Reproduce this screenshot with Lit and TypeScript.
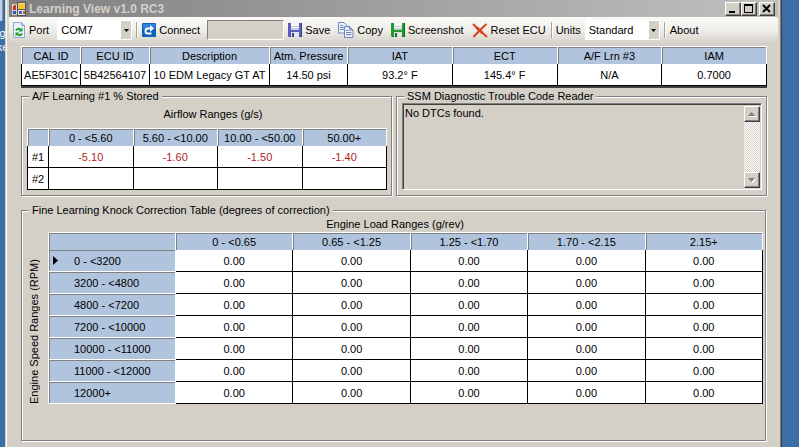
import { LitElement, html, css, svg } from "lit";
import { customElement } from "lit/decorators.js";

const icons = {
  app: svg`<svg width="14" height="14" viewBox="0 0 14 14"><path fill="#d4d0c8" d="M0 2h5v11H0z"/><path fill="#c03a1e" d="M1 3h3v5H1z"/><path fill="#e8c0a0" d="M1 3h1v1H1z"/><path fill="#555" d="M5 0h9v14H5z"/><path fill="#f6c63c" d="M6 1h7v6H6z"/><path fill="#fbe08a" d="M6 1h7v1H6z"/><path fill="#2f56b8" d="M1 9h3v3H1z"/><path fill="#e9e6dc" d="M6 8h7v5H6z"/><path fill="#3a62cc" d="M7 9h3v3H7z"/><path fill="#d05030" d="M11 9h2v3h-2z"/></svg>`,
  port: svg`<svg width="14" height="16" viewBox="0 0 14 16"><path fill="#eaf2ff" stroke="#90a8d0" d="M.5.500h8l3 3v12H.500z"/><path fill="#c4d4f0" stroke="#90a8d0" d="M8.500.500v3h3z"/><path fill="none" stroke="#1f9a28" stroke-width="2" d="M3 8.500c1-2 3-2 4.500-1M9 11.500c-1 2-3 2-4.500 1"/><path fill="#1f9a28" d="M9.500 5.500v4h-4zM2.500 14.500v-4h4z"/></svg>`,
  connect: svg`<svg width="14" height="14" viewBox="0 0 14 14"><rect width="14" height="14" rx="1" fill="#0f62b8"/><path fill="#2c86dc" d="M1 1h12v5H1z"/><path fill="none" stroke="#fff" stroke-width="2" d="M9.500 10.500H5.500c-1.500 0-2-1-2-2.500s1-2.500 2.500-2.500h2.500"/><path fill="#fff" d="M8 2l4 3.500L8 9z"/></svg>`,
  copy: svg`<svg width="16" height="16" viewBox="0 0 16 16"><g stroke="#7084bc"><path fill="#eaf0fc" d="M.5.500h5.500l3 3v7.500H.500z"/><path d="M2 3.500h3M2 5.500h5M2 7.500h4"/><path fill="#eaf0fc" d="M6.500 4.500h5l3.500 3.500v7.500H6.500z"/><path fill="#b8c8ec" d="M11.500 4.500V8H15z"/><path d="M8 8.500h2.500M8 10.500h5.500M8 12.500h5.500"/></g></svg>`,
  reset: svg`<svg width="16" height="15" viewBox="0 0 16 15"><path fill="none" stroke="#d8441c" stroke-width="2" d="M1 1l4.500 4.500L15 14M14.500 1L8 7l-6.500 7"/><path stroke="#d8441c" stroke-width="3" d="M4.500 4.500l6 5.500"/></svg>`,
};

const disk = (c: string, d: string) => svg`<svg width="14" height="14" viewBox="0 0 14 14"><path fill="${c}" d="M0 0h14v14H1l-1-1z"/><path fill="${d}" d="M13 0h1v14H1v-1h12z"/><path fill="#f6f6fa" d="M3 0h8v7H3z"/><path fill="#c8ccd8" d="M3 3h8v1H3zM3 5h8v2H3z"/><path fill="#e4e4ec" d="M3 9h8v5H3z"/><path fill="${d}" d="M4 10h2v4H4z"/></svg>`;

const status = [
  ["CAL ID", "AE5F301C"],
  ["ECU ID", "5B42564107"],
  ["Description", "10 EDM Legacy GT AT"],
  ["Atm. Pressure", "14.50 psi"],
  ["IAT", "93.2° F"],
  ["ECT", "145.4° F"],
  ["A/F Lrn #3", "N/A"],
  ["IAM", "0.7000"],
];
const airflow = ["0 - <5.60", "5.60 - <10.00", "10.00 - <50.00", "50.00+"];
const learned = [
  { name: "#1", values: ["-5.10", "-1.60", "-1.50", "-1.40"] },
  { name: "#2", values: ["", "", "", ""] },
];
const loads = ["0 - <0.65", "0.65 - <1.25", "1.25 - <1.70", "1.70 - <2.15", "2.15+"];
const speeds = ["0 - <3200", "3200 - <4800", "4800 - <7200", "7200 - <10000", "10000 - <11000", "11000 - <12000", "12000+"];

@customElement("app-root")
export class AppRoot extends LitElement {
  static styles = css`
    :host {
      display: flex;
      min-height: 100vh;
      background: #3a6ea5;
      font: 11px/14px "Liberation Sans", Arial, sans-serif;
      color: #000;
      overflow: hidden;
    }
    * { box-sizing: border-box; }
    svg { display: block; flex: none; }
    button, select, textarea, input { font: inherit; color: inherit; border-radius: 0; margin: 0; }

    .desktop { width: 5px; flex: none; overflow: hidden; color: #fff; white-space: nowrap; }
    .shortcut { width: 3px; height: 21px; margin-bottom: 5px; background: #c4d0e8; border-right: 1px solid #8090b0; }
    .desktop span { display: flex; justify-content: center; }

    .window {
      flex: 1;
      min-width: 0;
      margin-right: 17px;
      background: #d4d0c8;
      border: solid;
      border-width: 0 1px 0 1px;
      border-color: #404040 #404040 #404040 #d4d0c8;
      box-shadow: inset 1px 0 #fff, inset -1px 0 #808080;
      padding: 0 3px;
    }
    .title {
      display: flex;
      align-items: center;
      height: 17px;
      padding: 0 3px;
      background: linear-gradient(to right, #808080, #c0c0c0);
      color: #d4d0c8;
    }
    .title h1 { flex: 1; margin: 0 0 0 3px; font-size: 12px; line-height: 14px; font-weight: bold; }
    .raised {
      display: flex;
      align-items: center;
      justify-content: center;
      padding: 0;
      border: 1px solid;
      border-color: #fff #404040 #404040 #fff;
      background: #d4d0c8;
      box-shadow: inset -1px -1px #808080;
    }
    .title .raised { width: 16px; height: 14px; }
    .title .close { margin-left: 2px; }

    .toolbar {
      display: flex;
      align-items: center;
      height: 26px;
      padding-left: 1px;
      border-radius: 0 3px 3px 0;
      background: linear-gradient(#fbfaf8, #f0eeea 50%, #d6d2ca);
      white-space: nowrap;
    }
    .toolbar button, .toolbar label { display: flex; align-items: center; gap: 3px; }
    .toolbar button { height: 22px; margin: 0 1px; padding: 0 3px; border: 0; background: none; }
    .toolbar label { padding-left: 3px; }
    .toolbar .port { gap: 2px; padding-right: 4px; }
    .combo { position: relative; display: flex; flex: none; width: 75px; height: 20px; margin: 0 3px 0 4px; background: #fff; }
    .combo select { width: 100%; padding: 0 14px 0 4px; border: 0; background: none; appearance: none; }
    .combo .arrow {
      position: absolute;
      right: 1px;
      top: 1px;
      bottom: 1px;
      width: 10px;
      display: flex;
      align-items: center;
      justify-content: center;
      background: #d4d0c8;
      pointer-events: none;
    }
    .sep { width: 2px; height: 16px; margin-left: 1px; background: linear-gradient(to right, #a6a298 50%, #fff 50%); }
    .toolbar input {
      width: 77px;
      height: 20px;
      margin: 0 0 0 3px;
      border: 1px solid;
      border-color: #808080 #fff #fff #808080;
      background: #d4d0c8;
    }

    main { padding: 3px 11px 6px 12px; }

    table { width: 100%; table-layout: fixed; border-collapse: separate; border-spacing: 0; text-align: center; border-top: 1px solid #fff; }
    th, td { padding: 0; font-weight: normal; white-space: nowrap; overflow: hidden; }
    th { background: #b0c4de; border-right: 1px solid #fff; box-shadow: inset 1px 1px #808080; }
    th:first-child { border-left: 1px solid #fff; }
    thead th { height: 17px; }
    td { height: 22px; background: #fff; border: solid #000; border-width: 0 1px 1px 0; }
    td:first-child { border-left-width: 1px; }
    tbody th { height: 22px; text-align: left; padding-left: 25px; border-bottom: 1px solid #fff; }
    .status { border-bottom: 2px solid #404040; margin-bottom: 1px; }
    .c60 { width: 60px; }
    .c69 { width: 69px; }
    .c120 { width: 120px; }
    .c78 { width: 78px; }
    .c22 { width: 22px; }
    .c128 { width: 128px; }
    .low { color: #b01c1c; }

    .pair { display: grid; grid-template-columns: 1fr 1fr; gap: 4px; margin-bottom: 7px; }
    fieldset {
      min-width: 0;
      margin: 0;
      padding: 0 4px 5px 5px;
      border: 1px solid #808080;
      box-shadow: inset 1px 1px #fff, 1px 1px #fff;
    }
    legend { margin-left: 2px; padding: 0 3px; background: #d4d0c8; }
    .caption { margin: 0; text-align: center; }
    .airflow .caption { padding: 4px 0 7px 12px; }

    .codes { display: flex; height: 100%; border: 1px solid; border-color: #808080 #fff #fff #808080; box-shadow: inset 1px 1px #404040; padding: 2px 1px 1px 2px; }
    .codes textarea { flex: 1; min-width: 0; padding: 0; border: 0; outline: 0; resize: none; overflow: hidden; background: none; }
    .scroll {
      display: flex;
      flex-direction: column;
      justify-content: space-between;
      width: 16px;
      background: repeating-conic-gradient(#fff 0 25%, #d4d0c8 0 50%) 0 0 / 2px 2px;
    }
    .scroll .raised { width: 16px; height: 16px; }

    .knock { margin-right: 1px; padding: 0 2px 36px 5px; }
    .knock .caption { padding-bottom: 1px; }
    .grid { display: flex; }
    .axis { width: 21px; flex: none; padding-right: 7px; writing-mode: vertical-rl; }
    .axis span { display: block; height: 100%; transform: rotate(180deg); }
    .current { display: flex; align-items: center; margin-left: -21px; gap: 16px; }
  `;

  combo(id: string, value: string) {
    return html`<span class="combo"><select id=${id}><option>${value}</option></select>
      <span class="arrow"><svg width="5" height="3" viewBox="0 0 5 3"><path d="M0 0h5L2.500 3z"/></svg></span></span>`;
  }

  render() {
    return html`
      <aside class="desktop"><div class="shortcut"></div><span>g</span><span>ke</span></aside>
      <div class="window">
        <header class="title">
          ${icons.app}
          <h1>Learning View v1.0 RC3</h1>
          <button class="raised" aria-label="Minimize"><svg width="10" height="9" viewBox="0 0 10 9"><path d="M1 7h6v2H1z"/></svg></button>
          <button class="raised" aria-label="Maximize"><svg width="10" height="9" viewBox="0 0 10 9"><path fill-rule="evenodd" d="M0 0h9v9H0zM1 2v6h7V2z"/></svg></button>
          <button class="raised close" aria-label="Close"><svg width="10" height="9" viewBox="0 0 10 9"><path stroke="#000" stroke-width="2" d="M1 1l7 7M8 1L1 8"/></svg></button>
        </header>
        <nav class="toolbar">
          <label class="port" for="port">${icons.port}Port</label>${this.combo("port", "COM7")}
          <span class="sep"></span>
          <button>${icons.connect}Connect</button>
          <input readonly aria-label="Connection status" />
          <button>${disk("#5a5cc0", "#3c3c98")}Save</button>
          <button>${icons.copy}Copy</button>
          <button>${disk("#1c9a2c", "#0c7018")}Screenshot</button>
          <button>${icons.reset}Reset ECU</button>
          <span class="sep"></span>
          <label for="units">Units</label>${this.combo("units", "Standard")}
          <span class="sep"></span>
          <button>About</button>
        </nav>
        <main>
          <table class="status">
            <colgroup><col class="c60" /><col class="c69" /><col class="c120" /><col class="c78" /><col span="4" /></colgroup>
            <thead><tr>${status.map((s) => html`<th scope="col">${s[0]}</th>`)}</tr></thead>
            <tbody><tr>${status.map((s) => html`<td>${s[1]}</td>`)}</tr></tbody>
          </table>
          <div class="pair">
            <fieldset class="airflow">
              <legend>A/F Learning #1 % Stored</legend>
              <p class="caption">Airflow Ranges (g/s)</p>
              <table>
                <colgroup><col class="c22" /><col span="4" /></colgroup>
                <thead><tr><th></th>${airflow.map((a) => html`<th scope="col">${a}</th>`)}</tr></thead>
                <tbody>${learned.map((r) => html`<tr><td>${r.name}</td>${r.values.map((v) => html`<td class="low">${v}</td>`)}</tr>`)}</tbody>
              </table>
            </fieldset>
            <fieldset>
              <legend>SSM Diagnostic Trouble Code Reader</legend>
              <div class="codes">
                <textarea readonly aria-label="Diagnostic trouble codes" .value=${"No DTCs found."}></textarea>
                <div class="scroll">
                  <button class="raised" aria-label="Scroll up"><svg width="8" height="5" viewBox="0 0 8 5"><path fill="#fff" d="M1 4h7v1H1z"/><path fill="#808080" d="M0 4h7L3.500 0z"/></svg></button>
                  <button class="raised" aria-label="Scroll down"><svg width="8" height="5" viewBox="0 0 8 5"><path fill="#fff" d="M1 1h7L4.500 5z"/><path fill="#808080" d="M0 0h7L3.500 4z"/></svg></button>
                </div>
              </div>
            </fieldset>
          </div>
          <fieldset class="knock">
            <legend>Fine Learning Knock Correction Table (degrees of correction)</legend>
            <p class="caption">Engine Load Ranges (g/rev)</p>
            <div class="grid">
              <div class="axis"><span>Engine Speed Ranges (RPM)</span></div>
              <table>
                <colgroup><col class="c128" /><col span="5" /></colgroup>
                <thead><tr><th></th>${loads.map((l) => html`<th scope="col">${l}</th>`)}</tr></thead>
                <tbody>${speeds.map(
                  (s, i) => html`<tr>
                    <th scope="row">${i === 0 ? html`<span class="current"><svg width="5" height="9" viewBox="0 0 5 9"><path d="M0 0l5 4.500L0 9z"/></svg>${s}</span>` : s}</th>
                    ${loads.map(() => html`<td>0.00</td>`)}
                  </tr>`
                )}</tbody>
              </table>
            </div>
          </fieldset>
        </main>
      </div>
    `;
  }
}
